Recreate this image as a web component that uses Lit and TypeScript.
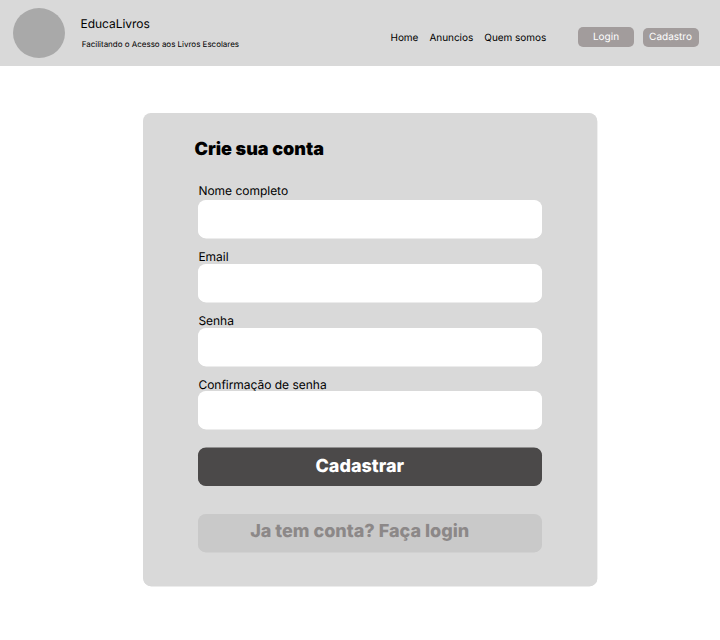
import { LitElement, html, css } from "lit";
import { customElement } from "lit/decorators.js";

const links = ["Home", "Anuncios", "Quem somos"];
const fields = [
  { id: "nome", label: "Nome completo", type: "text" },
  { id: "email", label: "Email", type: "email" },
  { id: "senha", label: "Senha", type: "password" },
  { id: "confirmacao", label: "Confirmação de senha", type: "password" },
];

@customElement("site-header")
class SiteHeader extends LitElement {
  static styles = css`
    :host { display: flex; box-sizing: border-box; height: 66px; background: #d9d9d9; padding-left: 13px; }
    .logo { width: 52px; height: 50px; margin-top: 8px; border-radius: 50%; background: #a9a9a9; flex: none; }
    .brand { margin: 16px 0 0 15.5px; width: 310px; white-space: nowrap; flex: none; }
    .name { font-size: 12px; line-height: 16px; letter-spacing: -0.04px; }
    .tag { font-size: 8px; line-height: 12px; margin: 6px 0 0 1.2px; letter-spacing: -0.015px; }
    nav { display: flex; gap: 11.2px; margin-top: 31px; font-size: 10px; line-height: 14px; letter-spacing: -0.05px; white-space: nowrap; width: 187.5px; flex: none; }
    .actions { display: flex; gap: 9px; margin-top: 27px; }
    button { font: inherit; font-size: 10px; line-height: 19px; width: 56px; height: 20px; padding: 0; border: 0; border-radius: 5px; background: #a29c9c; color: #fff; text-rendering: inherit; }
    .login { padding-top: 1px; }
    .join { margin-top: 1px; height: 19px; padding: 0 1px 1px 0; }
  `;
  render() {
    return html`
      <div class="logo"></div>
      <div class="brand">
        <div class="name">EducaLivros</div>
        <div class="tag">Facilitando o Acesso aos Livros Escolares</div>
      </div>
      <nav>${links.map((l) => html`<span>${l}</span>`)}</nav>
      <div class="actions"><button class="login">Login</button><button class="join">Cadastro</button></div>
    `;
  }
}

@customElement("signup-form")
class SignupForm extends LitElement {
  static styles = css`
    :host { display: block; box-sizing: border-box; width: 454px; height: 473px; margin: 47px 0 0 143px; padding: 26px 55px 0; background: #d9d9d9; border-radius: 8px; box-shadow: 0.4px 0.4px 0 #d9d9d9; }
    h1 { font-size: 18px; line-height: 22px; font-weight: 900; margin: 0 0 22px -3.5px; }
    .field { display: grid; grid-template-rows: 15px 38px; height: 64px; }
    .field:first-of-type { grid-template-rows: 17px 38px; height: 66px; }
    .field:last-of-type { grid-template-rows: 14px 38px; height: 71px; }
    label { font-size: 12px; line-height: 16px; padding-left: 0.4px; letter-spacing: -0.02px; }
    input { box-sizing: border-box; width: 344px; height: 38px; border: 0; border-radius: 8px; background: #fff; padding: 0 12px; font: inherit; box-shadow: 0 0.4px 0 #fff; }
    button { display: block; width: 344px; height: 38px; border: 0; border-radius: 8px; padding: 0 20.5px 2px 0; font: inherit; font-size: 18px; font-weight: 800; text-rendering: inherit; }
    .primary { background: #4b4949; color: #fff; box-shadow: 0 -0.5px 0 #4b4949; }
    .secondary { background: #c9c9c9; color: #8c8888; margin-top: 28px; padding-bottom: 4px; box-shadow: 0 0.4px 0 #c9c9c9; }
  `;
  render() {
    return html`
      <h1>Crie sua conta</h1>
      ${fields.map((f) => html`<div class="field"><label for=${f.id}>${f.label}</label><input id=${f.id} type=${f.type} /></div>`)}
      <button class="primary">Cadastrar</button>
      <button class="secondary">Ja tem conta? Faça login</button>
    `;
  }
}

@customElement("app-root")
class AppRoot extends LitElement {
  static styles = css`
    :host { display: block; height: 640px; overflow: hidden; background: #fff; color: #000; font-family: Inter, "Liberation Sans", sans-serif; text-rendering: geometricPrecision; }
  `;
  render() {
    return html`<site-header></site-header><signup-form></signup-form>`;
  }
}
